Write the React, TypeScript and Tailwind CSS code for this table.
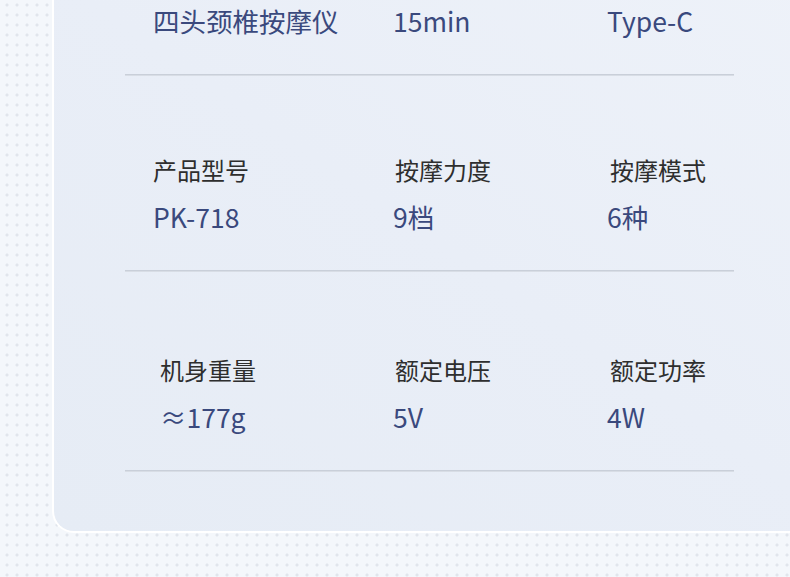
const rows = [
  {
    id: "row2",
    items: [
      { label: "产品型号", value: "PK-718" },
      { label: "按摩力度", value: "9档" },
      { label: "按摩模式", value: "6种" },
    ],
    pad: "pt-[82px] pb-[40px]",
  },
  {
    id: "row3",
    items: [
      { label: "机身重量", value: "≈177g", shift: true },
      { label: "额定电压", value: "5V" },
      { label: "额定功率", value: "4W" },
    ],
    pad: "pt-[86px] pb-[39px]",
  },
];

const topValues = ["四头颈椎按摩仪", "15min", "Type-C"];

const SpecCell = ({
  label,
  value,
  shift,
  col,
}: {
  label: string;
  value: string;
  shift?: boolean;
  col: number;
}) => {
  return (
    <div className={`flex flex-col gap-[22px] ${shift ? "pl-[7px]" : ""}`}>
      <span
        className={`text-[24px] leading-none text-[#2e2e2e] ${
          col === 2 ? "pl-[3px]" : col === 1 ? "pl-[2px]" : ""
        }`}
      >
        {label}
      </span>
      <span className="text-[26.5px] leading-none text-[#3a497d]">{value}</span>
    </div>
  );
};

const Divider = () => <div className="h-[2px] bg-[#c9cfd9] border-b border-[#d8dde5]" />;

export default function App() {
  return (
    <div
      className="w-[790px] h-[577px] overflow-hidden bg-[#f4f7fb] bg-[radial-gradient(circle,#e1e5ec_1.3px,transparent_1.8px)] bg-[length:10px_10px] bg-[position:2px_0px]"
      style={{ fontFamily: '"Noto Sans CJK SC", "Noto Sans", sans-serif' }}
    >
      <div className="-mt-[20px] ml-[52px] w-[800px] border-l-2 border-b-2 border-white rounded-bl-[22px] bg-gradient-to-tr from-[#e6ecf5] via-[#e9eef7] to-[#eef2f9] pb-[59px]">
        <div className="ml-[71px] w-[609px]">
          <div className="grid grid-cols-[240px_214px_1fr] pl-[28px] pt-[28px] pb-[39px]">
            {topValues.map((v) => (
              <span key={v} className="text-[26.5px] leading-none text-[#3a497d]">
                {v}
              </span>
            ))}
          </div>
          <Divider />
        </div>
        {rows.map((row) => (
          <div key={row.id} className="ml-[71px] w-[609px]">
            <div className={`grid grid-cols-[240px_214px_1fr] pl-[28px] ${row.pad}`}>
              {row.items.map((it, i) => (
                <SpecCell key={it.label} label={it.label} value={it.value} shift={it.shift} col={i} />
              ))}
            </div>
            <Divider />
          </div>
        ))}
      </div>
    </div>
  );
}
